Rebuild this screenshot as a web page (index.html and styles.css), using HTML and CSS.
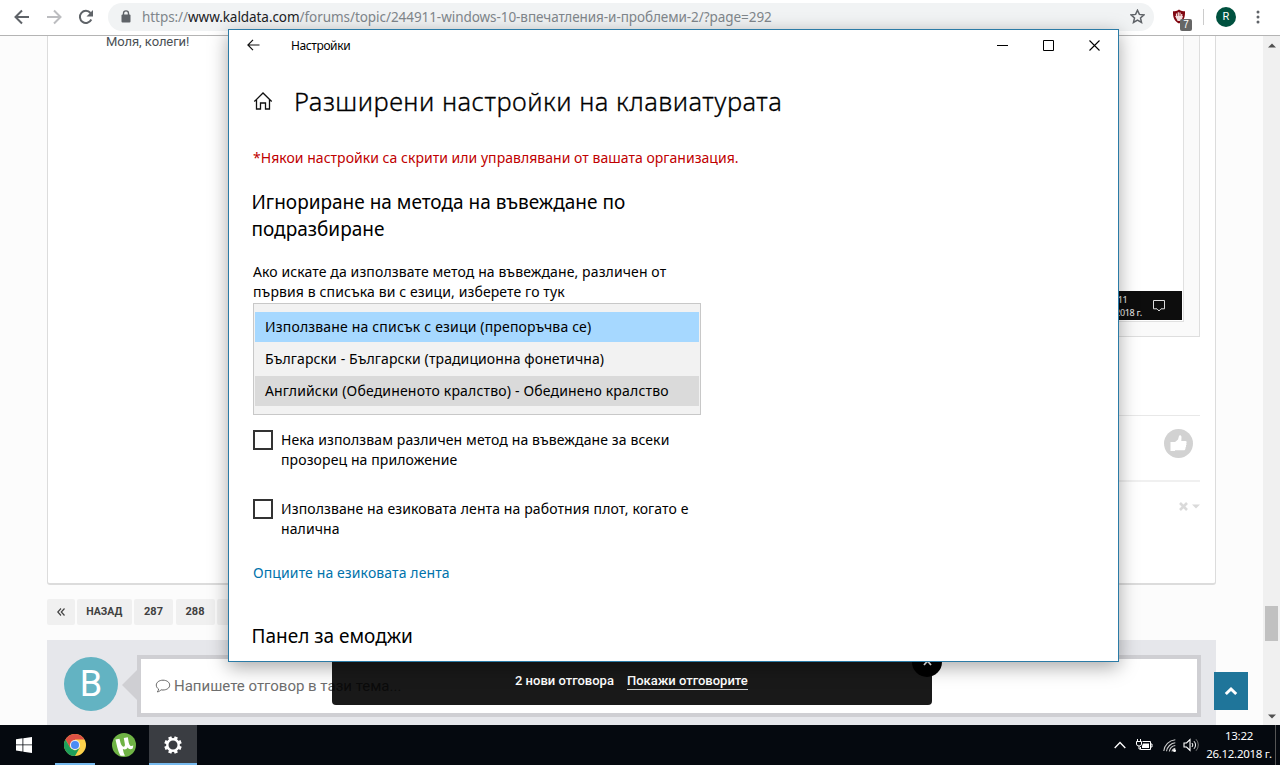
FILE: index.html
```
<!DOCTYPE html>
<html lang="bg">
<head>
    <meta charset="UTF-8">
    <meta name="viewport" content="width=device-width, initial-scale=1.0">
    <title>Windows 10 - впечатления и проблеми</title>
    <link rel="stylesheet" href="styles.css">
</head>
<body>
    <header class="toolbar">
        <svg class="nav-icon" width="16" height="16" viewBox="0 0 16 16"><path d="M15 8H2M8 1.5L1.5 8L8 14.500" fill="none" stroke="#5f6368" stroke-width="2"/></svg>
        <svg class="nav-icon" width="16" height="16" viewBox="0 0 16 16"><path d="M1 8h13M8 1.500L14.500 8L8 14.500" fill="none" stroke="#bcbdc0" stroke-width="2"/></svg>
        <svg class="nav-icon" width="16" height="16" viewBox="0 0 16 16"><path d="M13.300 10.500A6 6 0 1 1 12.500 4" fill="none" stroke="#5f6368" stroke-width="2"/><path d="M15 1v6.500H8.500z" fill="#5f6368"/></svg>
        <div class="address">
            <svg width="10" height="13" viewBox="0 0 10 13"><rect x="0.500" y="4.500" width="9" height="8" rx="1" fill="#5f6368"/><path d="M2.500 5V3.200a2.500 2.300 0 0 1 5 0V5" fill="none" stroke="#5f6368" stroke-width="1.400"/></svg>
            <span class="url">https://<b>www.kaldata.com</b>/forums/topic/244911-windows-10-впечатления-и-проблеми-2/?page=292</span>
            <svg class="star" width="15" height="15" viewBox="0 0 15 15"><path d="M7.500 1.200l1.900 4.200 4.500.5-3.400 3 1 4.500-4-2.400-4 2.400 1-4.500-3.400-3 4.500-.5z" fill="none" stroke="#5f6368" stroke-width="1.500"/></svg>
        </div>
        <div class="extension">
            <svg width="14" height="15" viewBox="0 0 14 15"><path d="M7 0.500C5 2 3 2.300 1 2.300C.8 8 2 12 7 14.500C12 12 13.200 8 13 2.300C11 2.300 9 2 7 .5z" fill="#800610"/><path d="M4.500 8V4.500M6.300 7V3.200M8 7V3.500M9.700 8V5M4 7.500l2 4h3l1.200-4z" stroke="#f3dede" stroke-width="1.200" fill="#f3dede"/></svg>
            <span class="count">7</span>
        </div>
        <span class="separator"></span>
        <span class="profile">R</span>
        <svg class="dots" width="4" height="14" viewBox="0 0 4 14" fill="#5f6368"><circle cx="2" cy="2" r="1.500"/><circle cx="2" cy="7" r="1.500"/><circle cx="2" cy="12" r="1.500"/></svg>
    </header>

    <main class="viewport">
        <div class="forum">
            <article class="post">
                <div class="post-body">
                    <p class="post-text">Моля, колеги!</p>
                    <div class="attachment">
                        <div class="attachment-image">
                            <div class="image-taskbar">
                                <span class="image-clock">13:11<br>26.12.2018 г.</span>
                                <svg width="14" height="13" viewBox="0 0 14 13"><path d="M1.500 1.500h11v8.300H9L7 12 5 9.800H1.500z" fill="none" stroke="#ddd"/></svg>
                            </div>
                        </div>
                    </div>
                </div>
                <div class="post-actions">
                    <span class="like">
                        <svg width="19" height="19" viewBox="0 0 19 19"><path d="M1.500 8h4.500v9h-4.500zM5.500 8.500L9 5.500l1-3.500c.3-1.200 2.500-.8 2.500 1L12.300 7h4c1.500 0 1.800 1.500.9 2.200.6.8.4 1.700-.3 2.200.4.900.2 1.600-.5 2 .3 1.900-.3 2.800-1.900 2.800H9.500L5.500 16z" fill="#fff"/></svg>
                    </span>
                </div>
                <div class="post-tools">
                    <svg width="9" height="9" viewBox="0 0 9 9"><path d="M1 1l7 7M8 1L1 8" stroke="#dadada" stroke-width="2.600"/></svg>
                    <svg width="8" height="5" viewBox="0 0 8 5"><path d="M0 .5h8L4 4.500z" fill="#dadada"/></svg>
                </div>
            </article>

            <nav class="pages">
                <a class="page first"><svg width="8" height="8" viewBox="0 0 8 8"><path d="M4 .5L.8 4L4 7.500M7.500 .5L4.300 4l3.200 3.500" fill="none" stroke="#444" stroke-width="1.200"/></svg></a>
                <a class="page prev">НАЗАД</a>
                <a class="page">287</a>
                <a class="page">288</a>
                <a class="page next"></a>
            </nav>

            <section class="reply">
                <span class="avatar">B</span>
                <span class="pointer"></span>
                <div class="reply-box">
                    <svg width="16" height="14" viewBox="0 0 16 14"><path d="M8 1.200c3.800 0 6.700 2.100 6.700 4.900S11.800 11 8 11c-.7 0-1.300 0-1.900-.2C5 12 3.800 12.700 2.300 12.900c.7-.8 1.200-1.700 1.300-2.900C2.100 9.100 1.300 7.700 1.300 6.100 1.300 3.300 4.200 1.200 8 1.200z" fill="none" stroke="#666"/></svg>
                    <span>Напишете отговор в тази тема...</span>
                </div>
            </section>
        </div>

        <div class="scrollbar">
            <svg width="8" height="5" viewBox="0 0 8 5"><path d="M0 4.500h8L4 .5z" fill="#505050"/></svg>
            <span class="thumb"></span>
            <svg width="8" height="5" viewBox="0 0 8 5"><path d="M0 .5h8L4 4.500z" fill="#505050"/></svg>
        </div>

        <div class="toast">
            <span>2 нови отговора</span>
            <a>Покажи отговорите</a>
            <span class="toast-close"><svg width="9" height="9" viewBox="0 0 9 9"><path d="M1 7l3.500-4L8 7" fill="none" stroke="#fff" stroke-width="1.800"/></svg></span>
        </div>
        <a class="to-top"><svg width="14" height="10" viewBox="0 0 14 10"><path d="M1.800 8L7 3l5.200 5" fill="none" stroke="#fff" stroke-width="3"/></svg></a>
    </main>

    <footer class="taskbar">
        <span class="task start"><svg width="16" height="16" viewBox="0 0 16 16" fill="#fff"><path d="M0 2.200L6.500 1.300V7.500H0zM7.300 1.200L16 0v7.500H7.300zM0 8.300h6.500v6.200L0 13.600zM7.300 8.300H16V16L7.300 14.700z"/></svg></span>
        <span class="task running">
            <svg width="22" height="22" viewBox="0 0 22 22"><circle cx="11" cy="11" r="11" fill="#fdd24b"/><path d="M11 11L1.470 5.500A11 11 0 0 1 20.530 5.500H11z" fill="#dd5144"/><path d="M1.470 5.500L6.200 13.700L11 11V5.500z" fill="#dd5144"/><path d="M1.470 5.500L6.240 13.750L11 16.500L15.760 13.750L11 22A11 11 0 0 1 1.470 5.500z" fill="#1e9f5b"/><circle cx="11" cy="11" r="5.100" fill="#f1f1f1"/><circle cx="11" cy="11" r="4" fill="#4b8bf4"/></svg>
        </span>
        <span class="task torrent">
            <svg width="24" height="24" viewBox="0 0 24 24"><circle cx="12" cy="12" r="12" fill="#6fb345"/><path d="M3.500 6.500l4-.8c.8 2.800 1 5.300 2.700 7.300 1.500 1.500 3 .5 2.700-1.800L11.800 5l4-.8c.7 3.500.8 7 2.500 8.500.8.600 1.800.3 3-.1l-.6 3c-2 1-4 .8-5-1-1 2-3 2.500-4.900 1.500.5 2 .8 4.500 2.200 6.500-2 .3-3.500.3-4.700-.1C5.500 17.500 4.800 11.500 3.500 6.500z" fill="#fff"/></svg>
        </span>
        <span class="task active">
            <svg width="20" height="20" viewBox="0 0 20 20"><circle cx="10" cy="10" r="5.700" fill="none" stroke="#fff" stroke-width="2.400"/><g stroke="#fff" stroke-width="3.400"><path d="M7.900 4.900L6.700 1.900M12.100 4.900L13.300 1.900M15.100 7.900L18.100 6.700M15.100 12.100L18.100 13.300M12.100 15.100L13.300 18.100M7.900 15.100L6.700 18.100M4.900 12.100L1.900 13.300M4.900 7.900L1.900 6.700"/></g></svg>
        </span>
        <div class="tray">
            <svg width="12" height="8" viewBox="0 0 12 8"><path d="M.7 7L6 1.500L11.300 7" fill="none" stroke="#fff" stroke-width="1.300"/></svg>
            <svg class="battery" width="17" height="13" viewBox="0 0 17 13"><path d="M6.500 2.500h8v8H4.500V8M14.500 5h1.500v3h-1.500M1.500 0v2.500M4.500 0v2.500M.5 2.500h5V5a2.500 2 0 0 1-5 0zM3 7v3h1.500" fill="none" stroke="#fff"/><path d="M7 4.500h6v4.500H6V7z" fill="#fff"/></svg>
            <svg class="wifi" width="13" height="13" viewBox="0 0 13 13"><path d="M.8 12C1.500 6 6 1.500 12.300 .8M3.500 12.300C4 8 8 4 12.300 3.700M6.300 12.500C6.800 9.500 9 7 12.300 6.500M9 12.500c.3-1.800 1.500-3 3.300-3.300" fill="none" stroke="#ccc" stroke-width="1.100"/><circle cx="11.500" cy="11.500" r="1.500" fill="#fff"/></svg>
            <svg class="volume" width="17" height="14" viewBox="0 0 17 14"><path d="M1 5h2.500L7 1.500v11L3.500 9H1z" fill="none" stroke="#fff" stroke-width="1.100"/><path d="M9 5a3 3 0 0 1 0 4M11 3.200a5.500 5.500 0 0 1 0 7.600" fill="none" stroke="#fff"/><path d="M13 1.200a8.500 8.500 0 0 1 0 11.600" fill="none" stroke="#777"/></svg>
            <div class="clock"><span>13:22</span><span class="date">26.12.2018 г.</span></div>
        </div>
    </footer>

    <div class="window">
        <div class="titlebar">
            <svg width="13" height="12" viewBox="0 0 13 12"><path d="M12.500 6H1M6 .8L.9 6L6 11.200" fill="none" stroke="#111" stroke-width="1.200"/></svg>
            <span class="window-name">Настройки</span>
            <div class="controls">
                <svg width="11" height="11" viewBox="0 0 11 11"><path d="M0 5.500h11" stroke="#000"/></svg>
                <svg width="11" height="11" viewBox="0 0 11 11"><path d="M.5 .5h10v10H.5z" fill="none" stroke="#000"/></svg>
                <svg width="11" height="11" viewBox="0 0 11 11"><path d="M.5 .5l10 10M10.500 .5l-10 10" stroke="#000" stroke-width="1.100"/></svg>
            </div>
        </div>
        <div class="settings">
            <div class="heading">
                <svg width="20" height="18" viewBox="0 0 20 18"><path d="M1.300 9.500L10 1l8.700 8.500M3.500 7.500v9.500h4v-6h5v6h4V7.500" fill="none" stroke="#111" stroke-width="1.300"/></svg>
                <h1>Разширени настройки на клавиатурата</h1>
            </div>
            <p class="warning">*Някои настройки са скрити или управлявани от вашата организация.</p>
            <h2 class="override">Игнориране на метода на въвеждане по<br>подразбиране</h2>
            <p class="hint">Ако искате да използвате метод на въвеждане, различен от<br>първия в списъка ви с езици, изберете го тук</p>
            <ul class="dropdown">
                <li class="selected">Използване на списък с езици (препоръчва се)</li>
                <li>Български - Български (традиционна фонетична)</li>
                <li class="hover">Английски (Обединеното кралство) - Обединено кралство</li>
            </ul>
            <div class="option">
                <span class="checkbox"></span>
                <span>Нека използвам различен метод на въвеждане за всеки<br>прозорец на приложение</span>
            </div>
            <div class="option">
                <span class="checkbox"></span>
                <span>Използване на езиковата лента на работния плот, когато е<br>налична</span>
            </div>
            <a class="link">Опциите на езиковата лента</a>
            <h2 class="emoji">Панел за емоджи</h2>
        </div>
    </div>
</body>
</html>
```
FILE: styles.css
```
* {
    box-sizing: border-box;
}
body {
    margin: 0;
    width: 1280px;
    height: 765px;
    overflow: hidden;
    display: flex;
    flex-direction: column;
    position: relative;
    font-family: "Noto Sans", "Open Sans", sans-serif;
    background: #fff;
}
h1, h2, p, ul {
    margin: 0;
    padding: 0;
    font-weight: normal;
}
svg {
    display: block;
    flex: none;
}

/* browser toolbar */
.toolbar {
    height: 36px;
    flex: none;
    display: flex;
    align-items: center;
    padding: 0 20px 2px 14px;
    border-bottom: 1px solid #b4b4b4;
    background: #fff;
}
.nav-icon {
    margin-right: 16px;
}
.address {
    width: 1047px;
    height: 28px;
    margin-left: -2px;
    padding: 0 9px 0 13px;
    border-radius: 14px;
    background: #f1f3f4;
    display: flex;
    align-items: center;
}
.url {
    margin-left: 11px;
    font-size: 13.5px;
    letter-spacing: -0.06px;
    color: #80868b;
    white-space: nowrap;
}
.url b {
    font-weight: normal;
    color: #202124;
}
.star {
    margin-left: auto;
}
.extension {
    display: flex;
    position: relative;
    margin-left: 18px;
}
.count {
    position: absolute;
    left: 8px;
    top: 10px;
    width: 12px;
    height: 12px;
    border-radius: 2px;
    background: #666;
    color: #fff;
    font: 10px/12px "Liberation Sans", sans-serif;
    text-align: center;
}
.separator {
    width: 1px;
    height: 16px;
    margin-left: 17px;
    background: #ccc;
}
.profile {
    width: 20px;
    height: 20px;
    margin-left: 12px;
    border-radius: 50%;
    background: #00513f;
    color: #fff;
    font: 11px/20px Roboto, sans-serif;
    text-align: center;
}
.dots {
    margin-left: 20px;
}

/* forum page */
.viewport {
    flex: 1;
    display: flex;
    position: relative;
    overflow: hidden;
    background: #fcfcfc;
    font-family: Roboto, sans-serif;
}
.forum {
    width: 1263px;
    padding: 0 47px;
}
.post {
    height: 549px;
    padding: 0 15px;
    border: 1px solid #dcdcdc;
    border-top: 0;
    border-bottom-width: 2px;
    border-radius: 0 0 3px 3px;
    background: #fff;
}
.post-body {
    height: 379px;
    display: flex;
    align-items: flex-start;
    justify-content: space-between;
    padding-left: 43px;
}
.post-text {
    font-size: 13px;
    line-height: 11px;
    letter-spacing: -0.05px;
    color: #4a4f54;
}
.attachment {
    width: 800px;
    height: 301px;
    padding: 0 15px 14px;
    border: 1px solid #dedede;
    border-top: 0;
    background: #fafafa;
}
.attachment-image {
    height: 286px;
    padding: 0 1px 1px;
    border: 1px solid #e0e0e0;
    border-top: 0;
    background: #fff;
    display: flex;
    align-items: flex-end;
}
.image-taskbar {
    width: 100%;
    height: 29px;
    padding-right: 16px;
    display: flex;
    align-items: center;
    justify-content: flex-end;
    gap: 10px;
    background: #0d0d0d;
}
.image-clock {
    color: #ddd;
    font: 500 9px/13px "Noto Sans", sans-serif;
    letter-spacing: -0.3px;
    text-align: center;
}
.post-actions {
    height: 67px;
    margin-left: 400px;
    padding: 13px 7px;
    display: flex;
    justify-content: flex-end;
    border-top: 1px solid #e8e8e8;
    border-bottom: 2px solid #f0f0f0;
}
.like {
    width: 29px;
    height: 29px;
    border-radius: 50%;
    background: #d2d2d2;
    display: flex;
    align-items: center;
    justify-content: center;
}
.post-tools {
    height: 49px;
    display: flex;
    align-items: center;
    justify-content: flex-end;
    gap: 4px;
}
.pages {
    display: flex;
    gap: 2.5px;
    margin-top: 14px;
}
.page {
    width: 39px;
    height: 26px;
    border-radius: 2px;
    background: #f0f0f0;
    color: #404040;
    font-size: 11px;
    font-weight: bold;
    line-height: 26px;
    text-align: center;
}
.page.first {
    width: 27.5px;
    display: flex;
    align-items: center;
    justify-content: center;
}
.page.prev {
    width: 54.5px;
    font-size: 10.5px;
}
.reply {
    height: 85px;
    margin-top: 15px;
    padding: 15px 15px 0 17px;
    display: flex;
    background: #e6e7eb;
}
.avatar {
    width: 54px;
    height: 54px;
    margin-top: 2px;
    border-radius: 50%;
    background: #63b3c2;
    color: #fff;
    font-size: 36px;
    line-height: 55px;
    text-align: center;
}
.pointer {
    margin: 15px 0 0 4px;
    border: 15px solid transparent;
    border-left: 0;
    border-right-color: #cfcfd3;
    height: 30px;
}
.reply-box {
    flex: 1;
    height: 62px;
    padding-left: 14px;
    border: 4px solid #cfcfd3;
    background: #fff;
    display: flex;
    align-items: center;
    gap: 3px;
    font-size: 15px;
    color: #6e6e6e;
}
.scrollbar {
    width: 17px;
    padding: 7px 0 6px;
    background: #f0f0f0;
    display: flex;
    flex-direction: column;
    align-items: center;
}
.thumb {
    width: 13px;
    height: 35px;
    margin: 558px 0 auto;
    background: #c1c1c1;
}
.toast {
    position: absolute;
    left: 332px;
    bottom: 20px;
    width: 600px;
    height: 49px;
    padding-left: 183px;
    border-radius: 4px;
    background: rgba(0, 0, 0, 0.9);
    color: #fff;
    display: flex;
    align-items: center;
    gap: 13px;
    font-size: 13px;
    font-weight: 500;
    line-height: 16px;
}
.toast a {
    margin-top: 1px;
    border-bottom: 1px solid #ccc;
}
.toast-close {
    position: absolute;
    right: -10px;
    top: -9px;
    width: 30px;
    height: 30px;
    border-radius: 50%;
    background: #000;
    display: flex;
    align-items: center;
    justify-content: center;
}
.to-top {
    position: absolute;
    left: 1214px;
    bottom: 15px;
    width: 34px;
    height: 38px;
    background: #1f759a;
    display: flex;
    align-items: center;
    justify-content: center;
}

/* taskbar */
.taskbar {
    height: 40px;
    flex: none;
    display: flex;
    background: #05090f;
}
.task {
    width: 48px;
    display: flex;
    align-items: center;
    justify-content: center;
}
.task.running {
    width: 40px;
    margin: 0 5px 0 7px;
    border-bottom: 2px solid #76b9ed;
    padding-top: 2px;
}
.task.torrent {
    margin-right: 1px;
}
.task.active {
    background: #3a3d42;
    border-bottom: 2px solid #76b9ed;
    padding-top: 2px;
}
.tray {
    margin-left: auto;
    display: flex;
    align-items: center;
    padding-right: 3px;
    border-right: 1px solid #555;
    margin-right: 4px;
}
.battery {
    margin-left: 10px;
}
.wifi {
    margin-left: 10px;
}
.volume {
    margin-left: 7px;
}
.clock {
    width: 66px;
    margin-left: 6px;
    display: flex;
    flex-direction: column;
    align-items: center;
    color: #fff;
    font-size: 11.5px;
    line-height: 18px;
    letter-spacing: -0.3px;
    white-space: nowrap;
}

/* settings window */
.window {
    position: absolute;
    left: 228px;
    top: 29px;
    width: 891px;
    height: 633px;
    border: 1px solid #2b7ba6;
    background: #fff;
    color: #000;
    box-shadow: 0 5px 18px rgba(0, 0, 0, 0.35);
    overflow: hidden;
}
.titlebar {
    height: 32px;
    padding: 0 18px 2px;
    display: flex;
    align-items: center;
}
.window-name {
    margin-left: 31px;
    font-size: 12px;
    letter-spacing: -0.4px;
}
.controls {
    margin-left: auto;
    display: flex;
    gap: 35px;
}
.settings {
    padding: 18px 24px 0;
    font-size: 14px;
    line-height: 20px;
    letter-spacing: 0.11px;
    white-space: nowrap;
}
.heading {
    height: 44px;
    display: flex;
    align-items: center;
    gap: 21px;
    padding-bottom: 2px;
}
h1 {
    font-size: 25.5px;
    font-weight: 300;
    line-height: 42px;
    letter-spacing: 0.5px;
    -webkit-text-stroke: 0.3px #000;
}
.warning {
    margin-top: 24px;
    color: #c00000;
    letter-spacing: 0.03px;
}
h2 {
    margin-left: -1.5px;
    font-size: 19px;
    line-height: 27px;
    letter-spacing: 0;
}
.override {
    margin-top: 21px;
}
.hint {
    margin-top: 19px;
}
.dropdown {
    width: 448px;
    height: 112px;
    margin-top: 1px;
    padding: 8px 1px;
    border: 1px solid #c8c8c8;
    background: #f2f2f2;
    list-style: none;
    display: flex;
    flex-direction: column;
    gap: 2px;
    letter-spacing: 0.1px;
}
.dropdown li {
    height: 30px;
    padding-left: 10px;
    line-height: 30px;
}
.dropdown .selected {
    background: #a6d8ff;
    letter-spacing: 0.17px;
}
.dropdown .hover {
    background: #dadada;
    letter-spacing: 0.17px;
}
.option {
    margin-top: 15px;
    display: flex;
    gap: 8px;
}
.option + .option {
    margin-top: 29px;
}
.checkbox {
    width: 20px;
    height: 20px;
    border: 2px solid #333;
}
.link {
    display: block;
    margin-top: 24px;
    color: #0072ab;
}
.emoji {
    margin-top: 40px;
}
```
